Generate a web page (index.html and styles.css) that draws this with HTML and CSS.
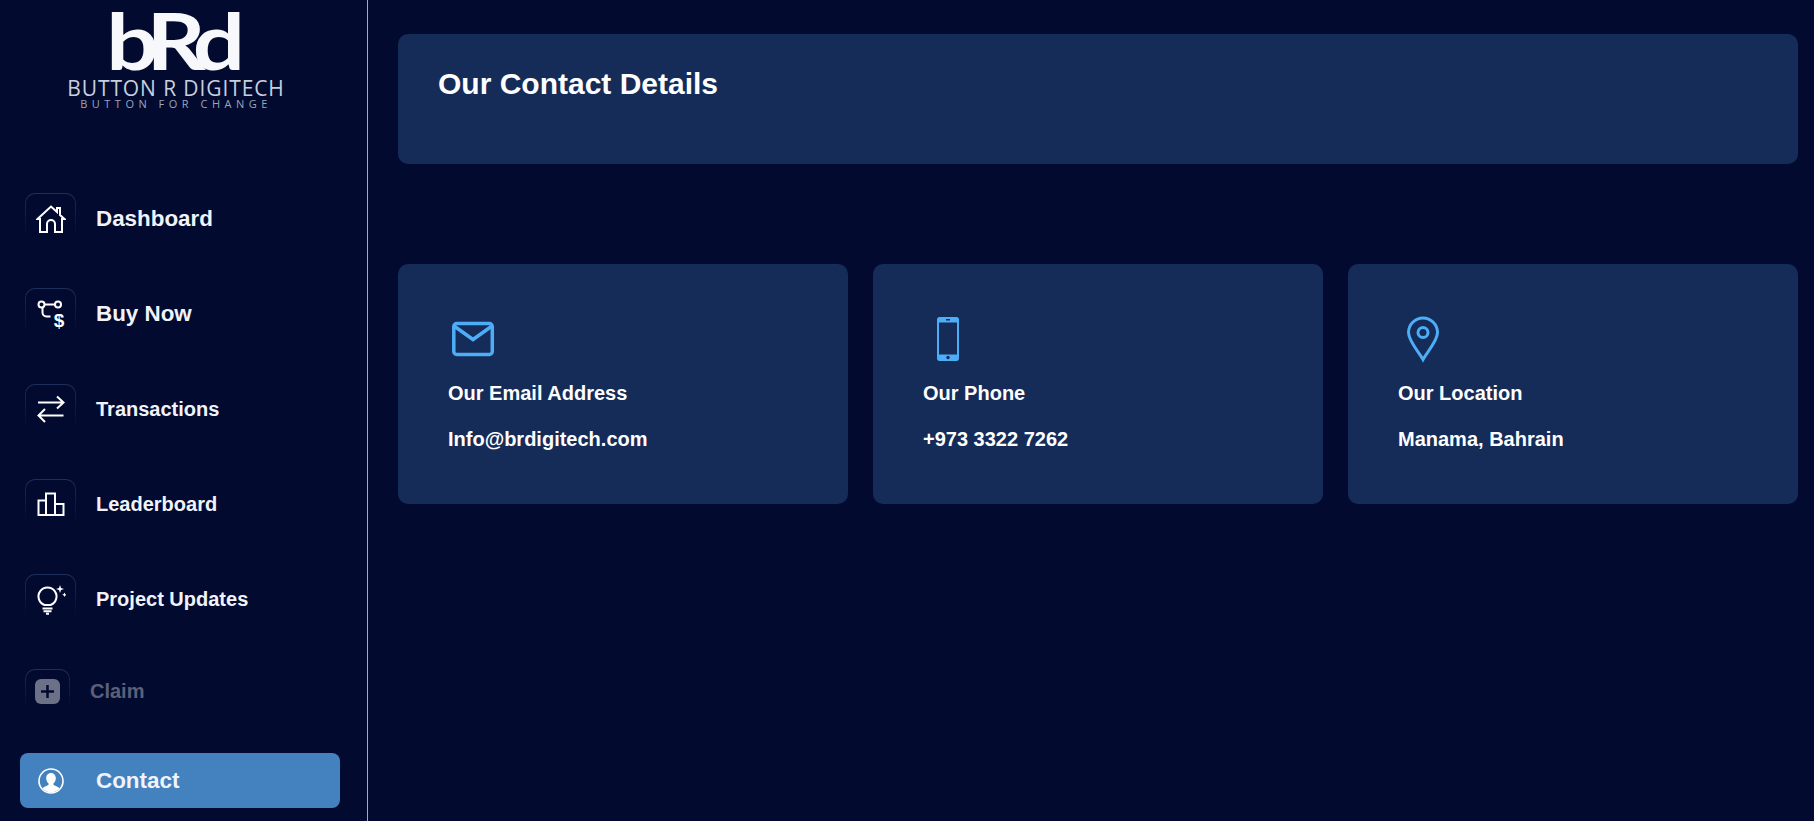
FILE: index.html
```html
<!DOCTYPE html>
<html lang="en">
<head>
    <meta charset="UTF-8">
    <meta name="viewport" content="width=device-width, initial-scale=1.0">
    <title>Contact</title>
    <link rel="stylesheet" href="styles.css">
</head>
<body>
    <div class="app">
        <aside class="sidebar">
            <div class="logo">
                <div class="logo-mark">bRd</div>
                <div class="logo-name">BUTTON R DIGITECH</div>
                <div class="logo-tag">BUTTON FOR CHANGE</div>
            </div>
            <nav class="nav">
                <a class="nav-item nav-large">
                    <span class="nav-icon">
                        <svg viewBox="0 0 30 30" width="30" height="30"><path class="line" d="M1.500 15 15 2.500 21 8V4h3v7l4.500 4H26v13h-7v-8a4 4 0 0 0-8 0v8H4V15z"/></svg>
                    </span>
                    Dashboard
                </a>
                <a class="nav-item nav-large">
                    <span class="nav-icon">
                        <svg viewBox="0 0 30 30" width="30" height="30">
                            <circle class="line" cx="5.500" cy="5.500" r="3"/>
                            <circle class="line" cx="22" cy="5.500" r="3"/>
                            <path class="line" d="M8.500 5.500h10.500M6.500 8.500v5a4 4 0 0 0 4 4h4"/>
                            <text class="dollar" x="17.700" y="27.500">$</text>
                        </svg>
                    </span>
                    Buy Now
                </a>
                <a class="nav-item">
                    <span class="nav-icon">
                        <svg viewBox="0 0 30 30" width="30" height="30"><path class="line" d="M2 8.500h25.500M21 2.500l6.500 6-6.500 6M27.500 21.500H2.500M9 15l-6.500 6.500L9 28"/></svg>
                    </span>
                    Transactions
                </a>
                <a class="nav-item">
                    <span class="nav-icon">
                        <svg viewBox="0 0 30 30" width="30" height="30"><path class="line" d="M2.500 11.500h7.500v14.500H2.500zM10 4.500h9V26h-9zM19 15h8.500v11H19z"/></svg>
                    </span>
                    Leaderboard
                </a>
                <a class="nav-item">
                    <span class="nav-icon">
                        <svg viewBox="0 0 30 30" width="30" height="30">
                            <path class="line" d="M8.500 20A9 9 0 1 1 14.500 20z"/>
                            <path class="line" d="M6.500 23.500h10M7.500 26.300h8M10 28.700h3"/>
                            <path class="fill" d="M24 0l1 3 3 1-3 1-1 3-1-3-3-1 3-1zM28.500 7.500l.7 1.600 1.600.7-1.600.7-.7 1.600-.7-1.600-1.600-.7 1.600-.7z"/>
                        </svg>
                    </span>
                    Project Updates
                </a>
                <a class="nav-item nav-disabled">
                    <span class="nav-icon">
                        <svg viewBox="0 0 25 25" width="25" height="25">
                            <rect class="fill" width="25" height="25" rx="6"/>
                            <path class="plus" d="M12.500 6v13M6 12.500h13"/>
                        </svg>
                    </span>
                    Claim
                </a>
                <a class="nav-item nav-large nav-active">
                    <span class="nav-icon">
                        <svg viewBox="0 0 26 26" width="26" height="26">
                            <circle class="line" cx="13" cy="13" r="12"/>
                            <path class="fill" d="M13 5c3 0 4.800 2.300 4.800 5.200 0 2.200-1 4-2.300 5.100v1.700c2.500 1 4.600 1.700 6 3.200A12 12 0 0 1 13 24.500a12 12 0 0 1-8.500-4.300c1.400-1.500 3.500-2.200 6-3.200v-1.700c-1.300-1.100-2.300-2.900-2.300-5.100C8.200 7.300 10 5 13 5z"/>
                        </svg>
                    </span>
                    Contact
                </a>
            </nav>
        </aside>

        <main class="content">
            <div class="page-head">
                <h1>Our Contact Details</h1>
            </div>
            <div class="cards">
                <div class="card">
                    <svg class="card-icon" viewBox="0 0 50 50">
                        <rect class="blue-line" x="5.800" y="9.500" width="38.500" height="31" rx="3"/>
                        <path class="blue-line" d="M6 12l19 13.500L44 12"/>
                    </svg>
                    <h3>Our Email Address</h3>
                    <p>Info@brdigitech.com</p>
                </div>
                <div class="card">
                    <svg class="card-icon" viewBox="0 0 50 50">
                        <rect class="blue-line thin" x="15" y="4" width="20" height="42" rx="3"/>
                        <path class="blue-fill" d="M17 3h16a3 3 0 0 1 3 3v2.500H14V6a3 3 0 0 1 3-3zM14 40.500h22V44a3 3 0 0 1-3 3H17a3 3 0 0 1-3-3z"/>
                        <rect class="cut" x="23" y="5" width="4" height="1.500"/>
                        <circle class="cut" cx="25" cy="43.500" r="1.700"/>
                    </svg>
                    <h3>Our Phone</h3>
                    <p>+973 3322 7262</p>
                </div>
                <div class="card">
                    <svg class="card-icon" viewBox="0 0 50 50">
                        <path class="blue-line mid" d="M25 45.500C21 38 10.500 27 10.500 18.500a14.500 14.500 0 0 1 29 0C39.500 27 29 38 25 45.500z"/>
                        <circle class="blue-line mid" cx="25" cy="18.500" r="5"/>
                    </svg>
                    <h3>Our Location</h3>
                    <p>Manama, Bahrain</p>
                </div>
            </div>
        </main>
    </div>
</body>
</html>
```
FILE: styles.css
```css
* {
    box-sizing: border-box;
}

body {
    margin: 0;
    font-family: "Liberation Sans", Arial, sans-serif;
    background: #020a30;
    color: #fff;
}

.app {
    display: flex;
    height: 821px;
    overflow: hidden;
}

.sidebar {
    width: 368px;
    flex-shrink: 0;
    border-right: 1px solid #7fb6e8;
    padding: 0 27px 0 20px;
}

/* logo */
.logo {
    height: 193px;
    padding-top: 4px;
    display: flex;
    flex-direction: column;
    align-items: center;
}

.logo-mark {
    font-family: "Lato", sans-serif;
    font-size: 78px;
    line-height: 72px;
    font-weight: bold;
    letter-spacing: -9px;
    color: #f6f8fc;
    margin-left: -20px;
    white-space: nowrap;
    transform: scaleX(1.18);
}

.logo-name {
    font-family: "Open Sans", sans-serif;
    font-size: 21px;
    line-height: 18px;
    letter-spacing: 0.9px;
    color: #c6d0de;
    margin: 3px 0 0 -8px;
    white-space: nowrap;
}

.logo-tag {
    font-family: "Open Sans", sans-serif;
    font-size: 11px;
    line-height: 11px;
    letter-spacing: 4.5px;
    color: #9aa5bc;
    margin: 1px 0 0 -8px;
    white-space: nowrap;
}

/* nav */
.nav {
    display: flex;
    flex-direction: column;
}

.nav-item {
    display: flex;
    align-items: center;
    gap: 20px;
    height: 51px;
    margin-bottom: 44.3px;
    padding-left: 5px;
    font-size: 20px;
    font-weight: bold;
    color: #f1f3fa;
}

.nav-large {
    font-size: 22.4px;
}

.nav-icon {
    width: 51px;
    height: 51px;
    flex-shrink: 0;
    display: flex;
    align-items: center;
    justify-content: center;
    border: 1px solid transparent;
    border-radius: 10px;
    background: linear-gradient(#020a30, #020a30) padding-box, linear-gradient(#1f2f5b, #020a30 85%) border-box;
}

.line {
    fill: none;
    stroke: #fff;
    stroke-width: 2;
}

.fill {
    fill: #fff;
}

.dollar {
    fill: #fff;
    font-size: 19px;
    font-weight: bold;
}

.plus {
    fill: none;
    stroke: #020a30;
    stroke-width: 2.500;
}

.nav-disabled {
    height: 45px;
    margin-bottom: 39px;
    color: #5a6079;
}

.nav-disabled .nav-icon {
    width: 45px;
    height: 45px;
}

.nav-disabled svg {
    opacity: 0.42;
}

.nav-active {
    height: 55px;
    margin-bottom: 0;
    width: 320px;
    padding-left: 18px;
    gap: 32px;
    background: #4382be;
    border-radius: 8px;
}

.nav-active .nav-icon {
    width: 26px;
    height: 26px;
    border: none;
    background: none;
}

.nav-active .line {
    stroke-width: 1.600;
}

/* main */
.content {
    flex: 1;
    padding: 34px 16px 0 30px;
}

.page-head {
    height: 130px;
    background: #152b58;
    border-radius: 10px;
    padding: 33px 40px 0;
}

.page-head h1 {
    margin: 0;
    font-size: 30px;
    line-height: 34px;
}

.cards {
    display: grid;
    grid-template-columns: repeat(3, 1fr);
    gap: 25px;
    margin-top: 100px;
}

.card {
    height: 240px;
    background: #152b58;
    border-radius: 10px;
    padding: 50px;
}

.card-icon {
    display: block;
    width: 50px;
    height: 50px;
}

.blue-line {
    fill: none;
    stroke: #4dadf7;
    stroke-width: 3.500;
}

.blue-line.thin {
    stroke-width: 2;
}

.blue-line.mid {
    stroke-width: 3;
}

.blue-fill {
    fill: #4dadf7;
}

.cut {
    fill: #152b58;
}

.card h3 {
    margin: 18px 0 0;
    font-size: 20px;
    line-height: 23px;
}

.card p {
    margin: 23px 0 0;
    font-size: 20px;
    line-height: 23px;
    font-weight: bold;
}
```
